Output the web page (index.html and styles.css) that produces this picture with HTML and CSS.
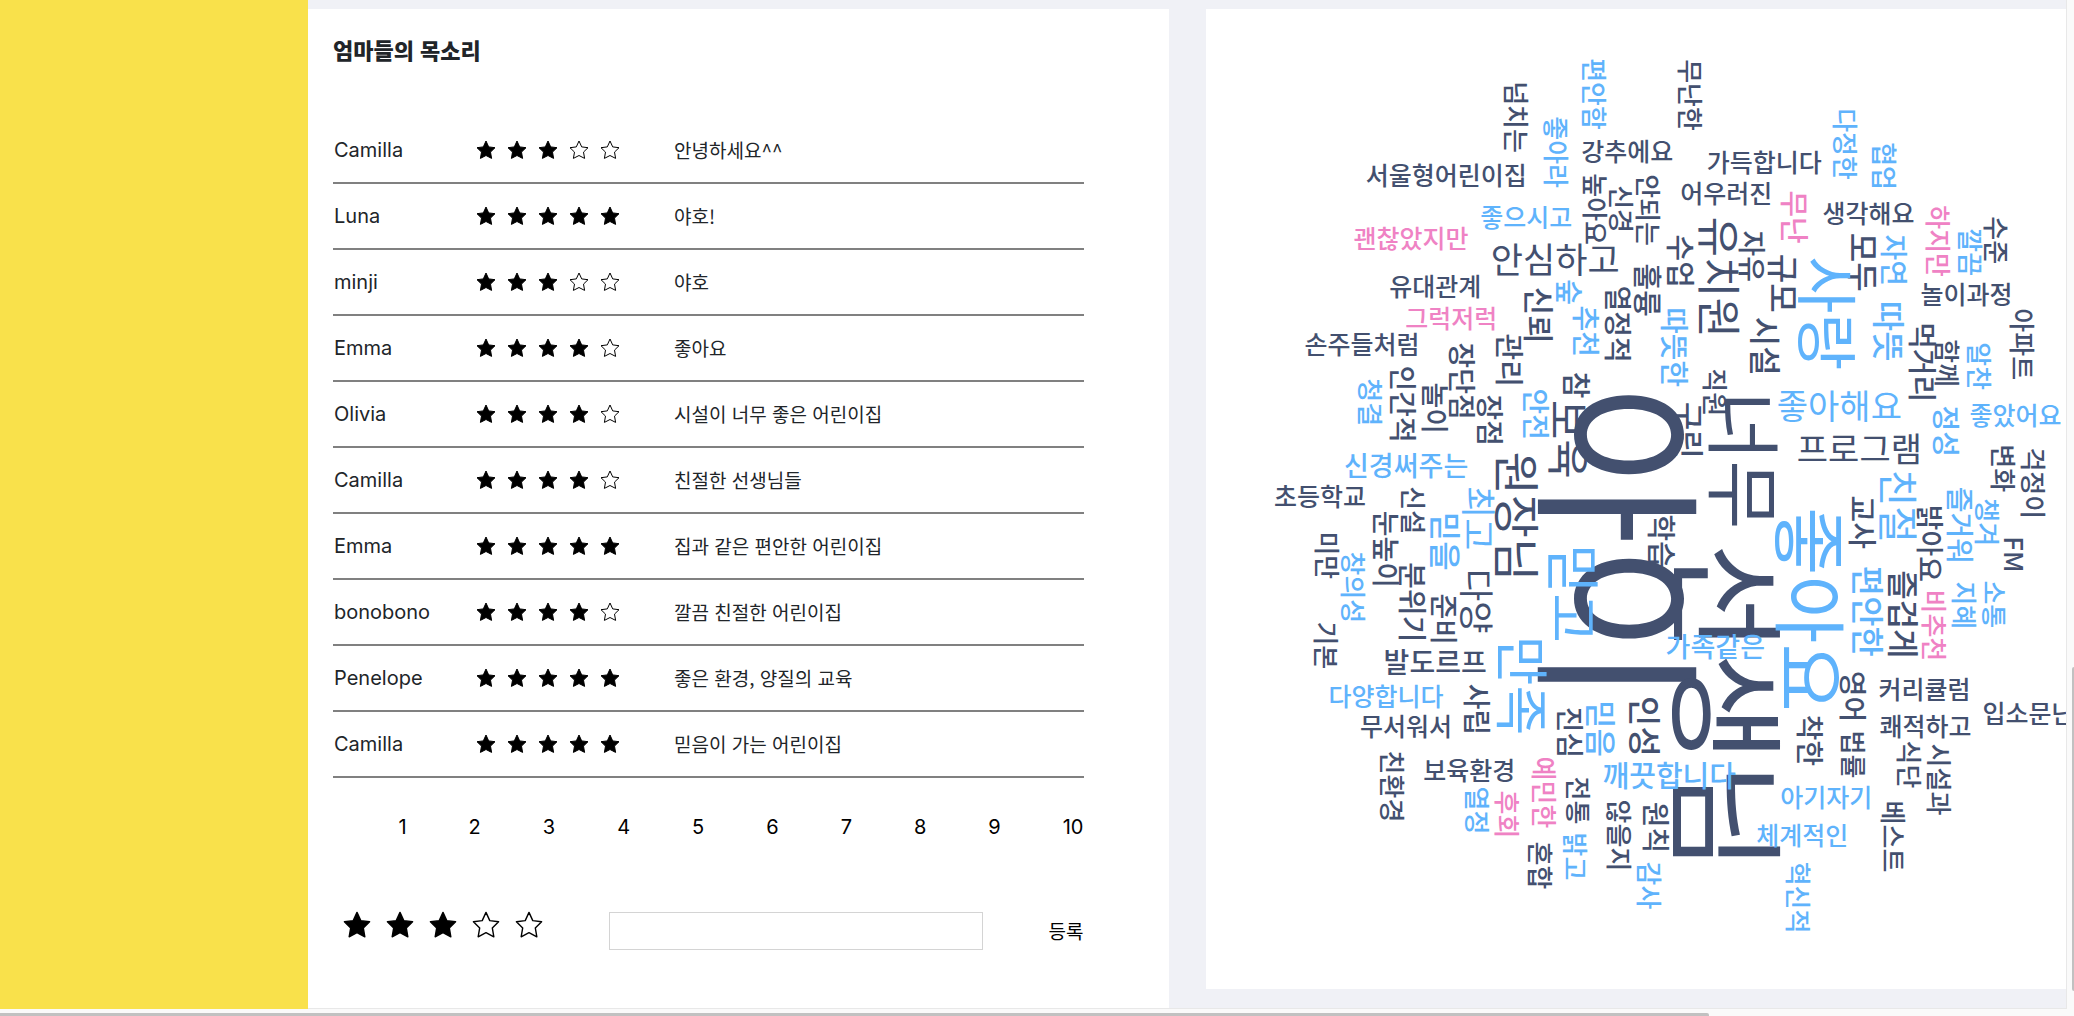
FILE: index.html
```html
<!DOCTYPE html>
<html lang="ko">
<head>
<meta charset="utf-8">
<title>엄마들의 목소리</title>
<link rel="stylesheet" href="styles.css">
</head>
<body>
<svg class="sprite" aria-hidden="true">
  <symbol id="star" viewBox="0 0 20 20"><path d="M10 1l2.700 5.900 6.300.8-4.500 4.400 1.100 6.300L10 15.500l-5.600 2.900 1.100-6.300L1 7.700l6.300-.8z" stroke-linejoin="round"/></symbol>
</svg>
<div class="page">
  <aside class="side"></aside>
  <main class="content">
    <section class="card voices">
      <h1 class="title">엄마들의 목소리</h1>
      <table class="reviews"><tbody id="reviews"></tbody></table>
      <nav class="pager" aria-label="페이지">
        <a href="#1">1</a><a href="#2">2</a><a href="#3">3</a><a href="#4">4</a><a href="#5">5</a><a href="#6">6</a><a href="#7">7</a><a href="#8">8</a><a href="#9">9</a><a href="#10">10</a>
      </nav>
      <form class="write">
        <div class="rate" id="rate"></div>
        <input class="comment" type="text" aria-label="한줄평">
        <button class="submit" type="button">등록</button>
      </form>
    </section>
    <section class="card cloud">
      <svg class="words" id="words" viewBox="1206 9 860 976" preserveAspectRatio="xMidYMin meet" role="img" aria-label="워드 클라우드"></svg>
    </section>
  </main>
  <div class="vbar"><div class="vthumb"></div></div>
  <div class="hbar"><div class="hthumb"></div></div>
</div>
<script src="app.js"></script>
</body>
</html>
```
FILE: styles.css
```css
* { box-sizing: border-box; }
body {
  margin: 0;
  background: #f0f1f6;
  color: #212529;
  font-family: Inter, "Noto Sans CJK KR", sans-serif;
  font-size: 20px;
}
.sprite { position: absolute; width: 0; height: 0; }
.page {
  display: grid;
  grid-template-columns: 308px 1fr 8px;
  grid-template-rows: 1fr 7px;
  min-height: 100vh;
}
.side { background: #f9e14b; }
.content {
  display: grid;
  grid-template-columns: 1fr 1fr;
  gap: 37px;
  padding-top: 9px;
  border-bottom: 1px solid #e8e8e8;
}
.card { background: #fff; min-width: 0; }
.voices { padding: 22px 85px 0 25px; }
.cloud { margin-bottom: 19px; overflow: hidden; }
.title {
  margin: 0;
  font-family: "Noto Sans CJK KR", sans-serif;
  font-size: 22px;
  line-height: 36px;
  font-weight: 900;
}
.reviews {
  width: 100%;
  margin-top: 50px;
  border-collapse: collapse;
  table-layout: fixed;
}
.reviews td {
  height: 66px;
  padding: 0;
  border-bottom: 2px solid #808080;
  line-height: 24px;
  vertical-align: middle;
}
.reviews .name { width: 143px; padding-left: 1px; }
.reviews .score { width: 198px; }
.reviews .text { font-family: "Noto Sans CJK KR", sans-serif; font-size: 19px; }
.stars { display: flex; gap: 11px; }
.star { width: 20px; height: 20px; display: block; fill: #000; stroke: #000; stroke-width: 1; }
.star.off { fill: none; stroke: #000; }
.pager {
  display: flex;
  justify-content: flex-end;
  gap: 62px;
  margin-top: 37px;
  line-height: 24px;
}
.pager a { color: #000; text-decoration: none; }
.write { display: flex; align-items: center; margin-top: 72px; }
.rate { display: flex; gap: 15px; margin-left: 10px; padding-bottom: 12px; }
.rate button { border: 0; padding: 0; background: none; }
.rate .star { width: 28px; height: 28px; }
.comment {
  flex: 1;
  min-width: 0;
  height: 38px;
  margin: 0 66px;
  border: 1px solid #d4d4d4;
  background: #fff;
}
.submit {
  border: 0;
  padding: 0;
  background: none;
  color: #000;
  font-family: "Noto Sans CJK KR", sans-serif;
  font-size: 19px;
  line-height: 24px;
}
.words {
  display: block;
  width: 100%;
  height: auto;
  font-family: "Noto Sans CJK KR", sans-serif;
  font-weight: 500;
  text-anchor: middle;
}
.large { font-weight: 400; }
.n { fill: #43506f; }
.b { fill: #5fb3fc; }
.p { fill: #ef82c4; }
.vbar { background: #fafafa; border-left: 1px solid #e8e8e8; padding: 667px 0 0 5px; }
.vthumb { height: 324px; background: #c1c1c1; border-radius: 2px 0 0 2px; }
.hbar { grid-column: 1 / -1; background: #fafafa; padding-top: 4px; }
.hthumb { width: 82.4%; height: 3px; background: #c1c1c1; border-radius: 0 2px 0 0; }
```
FILE: app.js
```javascript
const reviews = [
  ["Camilla", 3, "안녕하세요^^"],
  ["Luna", 5, "야호!"],
  ["minji", 3, "야호"],
  ["Emma", 4, "좋아요"],
  ["Olivia", 4, "시설이 너무 좋은 어린이집"],
  ["Camilla", 4, "친절한 선생님들"],
  ["Emma", 5, "집과 같은 편안한 어린이집"],
  ["bonobono", 4, "깔끔 친절한 어린이집"],
  ["Penelope", 5, "좋은 환경, 양질의 교육"],
  ["Camilla", 5, "믿음이 가는 어린이집"]
];
const star = on => `<svg class="star${on ? "" : " off"}" aria-hidden="true"><use href="#star"/></svg>`;
const scale = [1, 2, 3, 4, 5];
document.getElementById("reviews").innerHTML = reviews.map(([name, score, text]) =>
  `<tr><td class="name">${name}</td><td class="score"><div class="stars">${scale.map(i => star(i <= score)).join("")}</div></td><td class="text">${text}</td></tr>`
).join("");
document.getElementById("rate").innerHTML = scale.map(i =>
  `<button type="button" aria-label="${i}점">${star(i <= 3)}</button>`
).join("");

// Words by direction and colour: [word, centre x, centre y, font size]
const across = {
  n: [
    ["강추에요", 1627, 151, 25], ["서울형어린이집", 1446, 175, 25], ["안심하고", 1555, 260, 35],
    ["유대관계", 1435, 286, 25], ["손주들처럼", 1362, 344, 25], ["가득합니다", 1764, 162, 25],
    ["어우러진", 1726, 193, 25], ["생각해요", 1868, 213, 25], ["놀이과정", 1966, 294, 25],
    ["초등학교", 1320, 496, 25], ["발도르프", 1435, 662, 28], ["프로그램", 1859, 449, 34],
    ["무서워서", 1406, 726, 25], ["보육환경", 1469, 770, 25], ["커리큘럼", 1924, 689, 25],
    ["쾌적하고", 1925, 726, 25], ["입소문난", 2028, 713, 25]
  ],
  b: [
    ["좋으시고", 1526, 217, 25], ["신경써주는", 1406, 466, 27], ["좋아해요", 1839, 406, 34],
    ["좋았어요", 2015, 415, 25], ["가족같은", 1715, 647, 27], ["다양합니다", 1386, 696, 25],
    ["깨끗합니다", 1669, 776, 29], ["아기자기", 1826, 797, 25], ["체계적인", 1802, 835, 25]
  ],
  p: [["괜찮았지만", 1411, 238, 25], ["그럭저럭", 1451, 318, 25]]
};
const down = {
  n: [
    ["아이", 1618, 544, 174], ["선생님", 1726, 707, 119], ["너무", 1744, 460, 75],
    ["원장님", 1517, 516, 47], ["유치원", 1719, 277, 44], ["보육", 1568, 439, 43],
    ["넘치는", 1516, 117, 26], ["높아요", 1595, 209, 26], ["신경", 1621, 209, 26],
    ["안되는", 1648, 210, 26], ["신뢰", 1539, 315, 31], ["열정적", 1618, 324, 28],
    ["훌륭", 1647, 290, 29], ["수업", 1680, 261, 29], ["무난한", 1690, 95, 26],
    ["수준", 1996, 240, 26], ["모두", 1863, 262, 32], ["자유", 1752, 256, 28],
    ["규모", 1783, 283, 32], ["시설", 1765, 346, 32], ["먹거리", 1922, 362, 29],
    ["함께", 1947, 363, 26], ["아파트", 2022, 344, 26], ["관리", 1509, 360, 29],
    ["장단점", 1462, 381, 28], ["인간적", 1403, 404, 28], ["놀이", 1435, 408, 28],
    ["장점", 1490, 420, 28], ["참", 1576, 385, 29], ["신설", 1413, 510, 26],
    ["눈높이", 1386, 549, 28], ["미만", 1327, 555, 26], ["분위기", 1412, 602, 29],
    ["준비", 1444, 619, 28], ["다양", 1476, 601, 35], ["기본", 1326, 645, 26],
    ["직원", 1715, 392, 26], ["구린", 1689, 430, 31], ["학습", 1661, 541, 29],
    ["변화", 2003, 468, 26], ["걱정이", 2033, 483, 26], ["교사", 1862, 522, 29],
    ["밝아요", 1930, 543, 28], ["FM", 2014, 554, 26], ["즐겁게", 1903, 614, 32],
    ["사립", 1477, 709, 28], ["친환경", 1392, 786, 26], ["진심", 1570, 732, 28],
    ["전통", 1578, 800, 26], ["혼합", 1540, 865, 26], ["않을지", 1619, 835, 26],
    ["인성", 1645, 726, 33], ["원칙", 1656, 827, 28], ["영어", 1853, 696, 28],
    ["법률", 1853, 754, 26], ["착한", 1810, 740, 28], ["식단", 1909, 764, 26],
    ["시설과", 1939, 779, 26], ["베스트", 1893, 836, 26]
  ],
  b: [
    ["편안함", 1594, 94, 26], ["좋아라", 1556, 152, 26], ["숲", 1569, 292, 28],
    ["추천", 1586, 331, 28], ["다정한", 1845, 144, 26], ["협업", 1884, 166, 26],
    ["깔끔", 1970, 252, 26], ["자연", 1894, 260, 28], ["사랑", 1827, 313, 62],
    ["따뜻", 1889, 331, 33], ["따뜻한", 1674, 347, 29], ["알찬", 1979, 366, 26],
    ["청결", 1370, 402, 26], ["안전", 1536, 414, 28], ["믿을", 1445, 541, 32],
    ["최고", 1478, 518, 35], ["창의성", 1353, 587, 26], ["믿고", 1573, 593, 54],
    ["만족", 1522, 685, 54], ["정성", 1946, 431, 28], ["친절", 1898, 506, 40],
    ["즐거워", 1960, 525, 28], ["챙겨", 1987, 522, 26], ["좋아요", 1810, 609, 74],
    ["편안한", 1868, 611, 33], ["지혜", 1964, 605, 26], ["소통", 1994, 604, 26],
    ["열정", 1477, 810, 26], ["밝고", 1575, 856, 26], ["믿음", 1601, 728, 31],
    ["감사", 1649, 885, 26], ["혁신적", 1798, 897, 26]
  ],
  p: [
    ["무난", 1794, 217, 29], ["하지만", 1938, 241, 26], ["비추천", 1934, 625, 26],
    ["후회", 1507, 814, 26], ["예민한", 1544, 792, 26]
  ]
};
const draw = (groups, angle) => Object.entries(groups).map(([tone, list]) =>
  list.map(([word, x, y, size]) =>
    `<text class="${tone}${size > 33 ? " large" : ""}" font-size="${size}" transform="translate(${x} ${y}) rotate(${angle})" y="${Math.round(size * 0.38)}">${word}</text>`
  ).join("")
).join("");
document.getElementById("words").innerHTML = draw(down, 90) + draw(across, 0);
```
